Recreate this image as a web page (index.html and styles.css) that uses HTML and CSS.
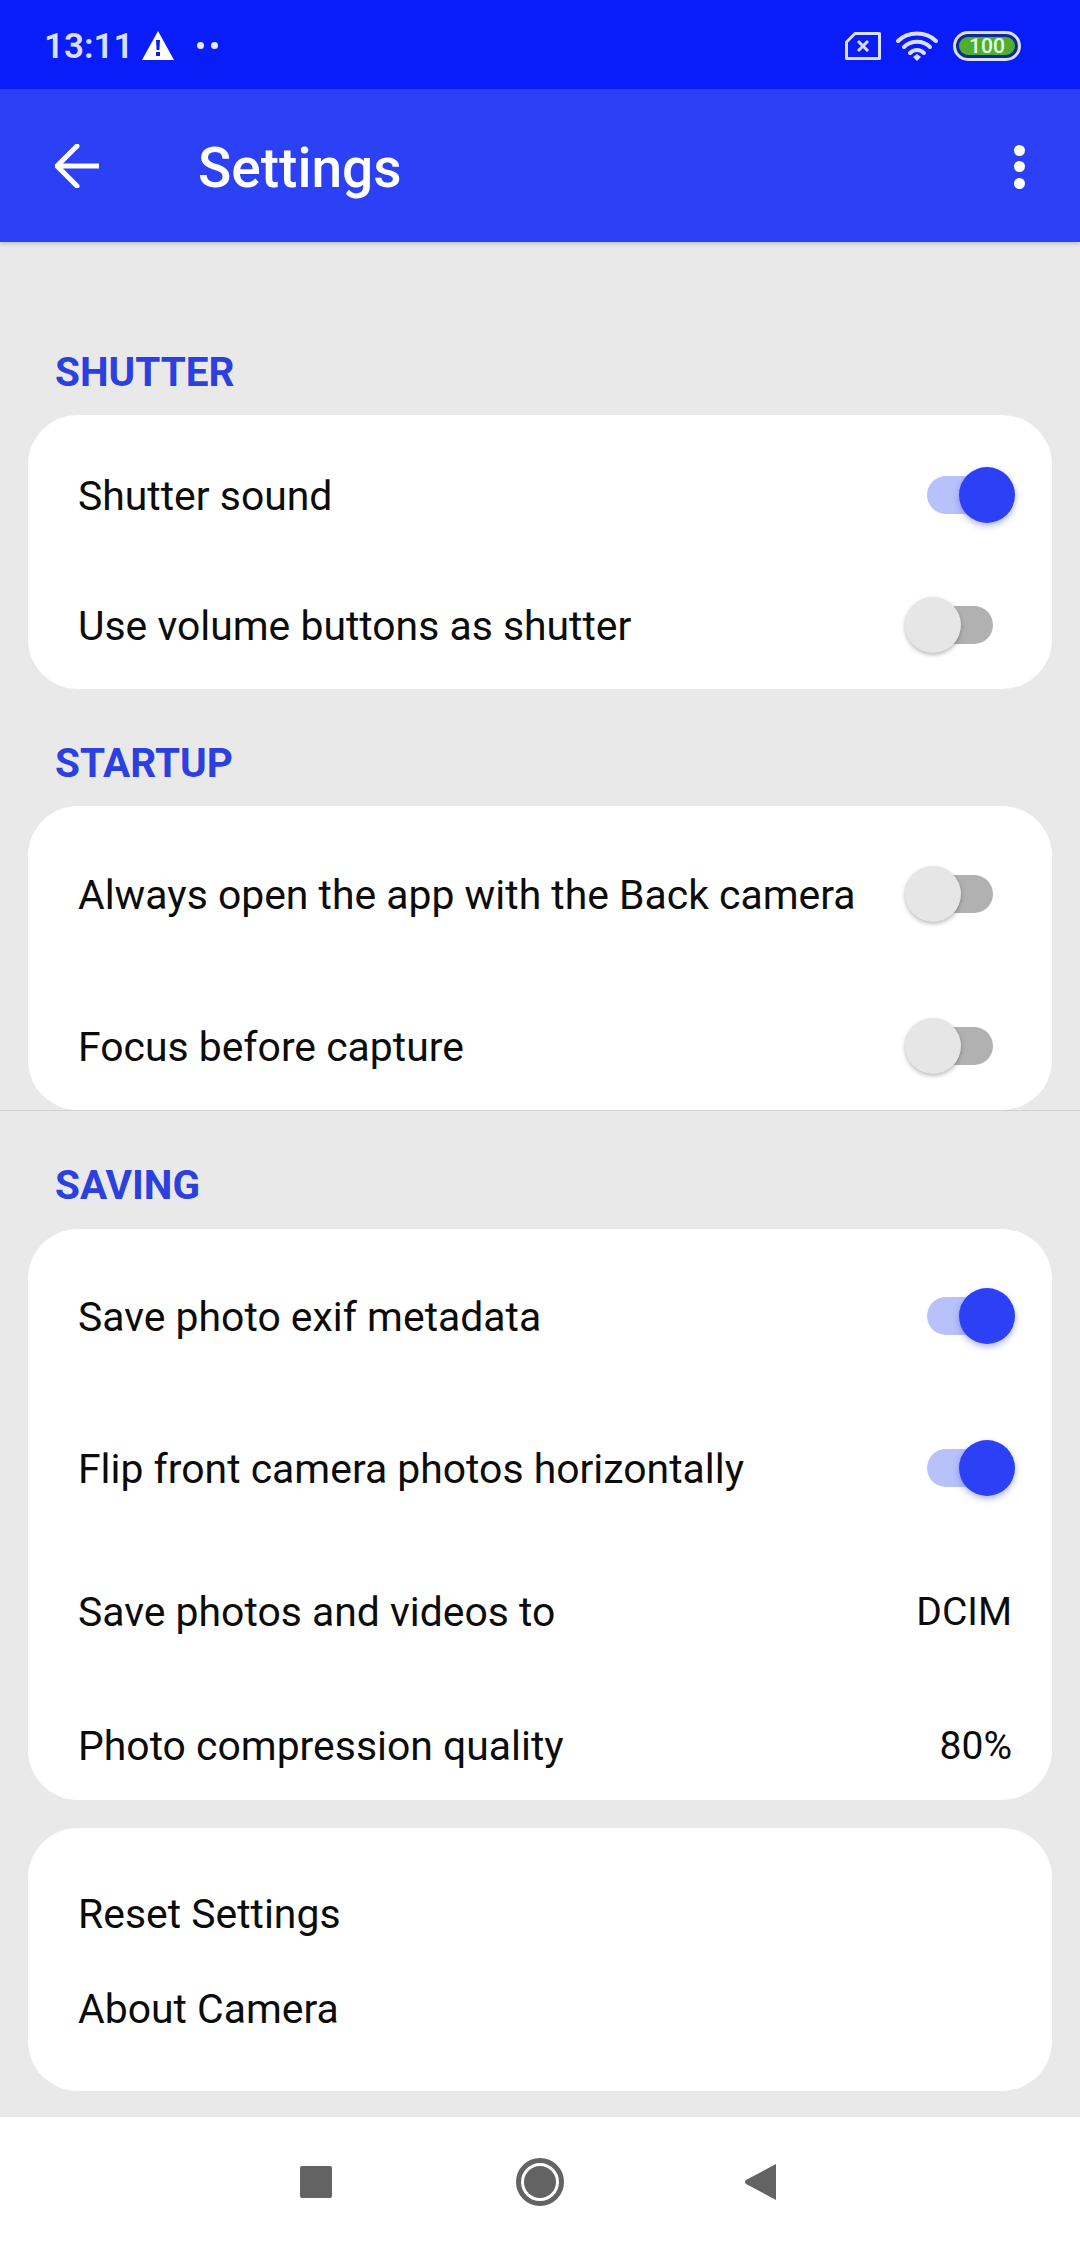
FILE: index.html
```html
<!DOCTYPE html>
<html lang="en">
<head>
<meta charset="utf-8">
<title>Settings</title>
<link rel="stylesheet" href="styles.css">
</head>
<body>
<div class="screen">
  <div class="status">
    <div class="status-left">
      <span class="time">13:11</span>
      <svg class="warn" viewBox="0 0 32 29" width="32" height="29"><path d="M16 0 L32 29 H0 Z" fill="#fff"/><path d="M14 9h4l-.6 10h-2.800z M14 21h4v4h-4z" fill="#0a1cf5"/></svg>
      <span class="dots"><i></i><i></i></span>
    </div>
    <div class="status-right">
      <svg width="36" height="28" viewBox="0 0 36 28"><path d="M10 1.500H34.500V26.500H1.500V10Z" fill="none" stroke="#d8defc" stroke-width="3" stroke-linejoin="round"/><path d="M13 9l10 10M23 9L13 19" stroke="#d8defc" stroke-width="3" fill="none"/></svg>
      <svg width="42" height="30" viewBox="0 0 42 30"><g fill="none" stroke="#d8defc" stroke-width="4" stroke-linecap="round"><path d="M2 10C12 0 30 0 40 10"/><path d="M8 16C15 9 27 9 34 16"/><path d="M14 22C18 18 24 18 28 22"/></g><path d="M17 26l4-3 4 3-4 4z" fill="#d8defc"/></svg>
      <div class="battery"><span class="battery-fill">100</span></div>
    </div>
  </div>
  <header class="appbar">
    <svg class="back" width="44" height="44" viewBox="0 0 44 44"><path d="M22 2L2 22L22 42M2 22H44" fill="none" stroke="#fff" stroke-width="5" stroke-linecap="round" stroke-linejoin="miter"/></svg>
    <h1 class="title">Settings</h1>
    <div class="menu"><i></i><i></i><i></i></div>
  </header>
  <main class="content">
    <section class="group group-shutter">
      <h2 class="heading">SHUTTER</h2>
      <div class="card card-1">
        <div class="row r1a"><span class="label">Shutter sound</span><span class="toggle on"><span class="track"></span><span class="knob"></span></span></div>
        <div class="row r1b"><span class="label">Use volume buttons as shutter</span><span class="toggle"><span class="track"></span><span class="knob"></span></span></div>
      </div>
    </section>
    <section class="group group-startup">
      <h2 class="heading">STARTUP</h2>
      <div class="card card-2">
        <div class="row r2a"><span class="label">Always open the app with the Back camera</span><span class="toggle"><span class="track"></span><span class="knob"></span></span></div>
        <div class="row r2b"><span class="label">Focus before capture</span><span class="toggle"><span class="track"></span><span class="knob"></span></span></div>
      </div>
    </section>
    <div class="divider"></div>
    <section class="group group-saving">
      <h2 class="heading">SAVING</h2>
      <div class="card card-3">
        <div class="row r3a"><span class="label">Save photo exif metadata</span><span class="toggle on"><span class="track"></span><span class="knob"></span></span></div>
        <div class="row r3b"><span class="label">Flip front camera photos horizontally</span><span class="toggle on"><span class="track"></span><span class="knob"></span></span></div>
        <div class="row r3c"><span class="label">Save photos and videos to</span><span class="value">DCIM</span></div>
        <div class="row r3d"><span class="label">Photo compression quality</span><span class="value">80%</span></div>
      </div>
    </section>
    <div class="card card-last">
      <div class="row r4a"><span class="label">Reset Settings</span></div>
      <div class="row r4b"><span class="label">About Camera</span></div>
    </div>
  </main>
  <nav class="navbar">
    <span class="nav-square"></span>
    <span class="nav-home"><span></span></span>
    <svg class="nav-back" width="32" height="36" viewBox="0 0 32 36"><path d="M32 0V36L2 20Q0 18 2 16Z" fill="#636363"/></svg>
  </nav>
</div>
</body>
</html>
```
FILE: styles.css
```css
* { box-sizing: border-box; }
html, body { margin: 0; padding: 0; }
body { font-family: Roboto, "Noto Sans", sans-serif; background: #e9e9ea; }
.screen { width: 1080px; height: 2246px; display: flex; flex-direction: column; overflow: hidden; background: #e9e9ea; }

.status { height: 89px; flex: none; background: #0a1cf8; display: flex; align-items: center; justify-content: space-between; padding: 2px 59px 0 44px; }
.status-left { display: flex; align-items: center; }
.time { font-size: 35px; font-weight: 600; color: #d8defc; line-height: 40px; margin-top: 3px; }
.warn { margin-left: 8px; margin-top: -1px; }
.dots { display: flex; gap: 7px; margin-left: 23px; }
.dots i { width: 7px; height: 7px; border-radius: 50%; background: #e6eafd; }
.status-right { display: flex; align-items: center; gap: 15px; }
.battery { width: 68px; height: 30px; border: 3px solid #d8defc; border-radius: 15px; background: #0f2c8c; padding: 3px; display: flex; }
.battery-fill { flex: 1; background: #4fae32; border-radius: 9px; color: #e8ffe0; font-size: 21px; line-height: 18px; font-weight: 500; text-align: center; }

.appbar { height: 153px; flex: none; background: #2c40f5; display: flex; align-items: center; padding: 0 55px; box-shadow: 0 2px 4px rgba(40,60,120,.22); position: relative; }
.back { flex: none; }
.title { margin: 5px 0 0 99px; font-size: 55px; font-weight: 500; color: #fff; line-height: 64px; flex: 1; }
.menu { display: flex; flex-direction: column; gap: 5.500px; margin-top: 2px; }
.menu i { width: 11px; height: 11px; border-radius: 50%; background: #fff; }

.content { flex: 1; padding: 0 28px; display: flex; flex-direction: column; }
.heading { margin: 0; padding-left: 27px; font-size: 40.500px; line-height: 48px; font-weight: 700; color: #2c40e0; }
.group-shutter { padding-top: 106px; }
.group-startup { padding-top: 50px; }
.group-saving { padding-top: 50px; }
.group .heading { margin-bottom: 19px; }
.group-saving .heading { margin-bottom: 20px; }

.card { background: #fff; border-radius: 50px; overflow: hidden; }
.card-1, .card-2 { padding-bottom: 13px; }
.card-3 { padding-bottom: 4px; }
.card-last { margin-top: 28px; padding-bottom: 32px; }
.row { display: flex; align-items: center; justify-content: space-between; height: 100px; padding: 0 40px 0 50px; }
.label { font-size: 40.900px; color: #0c0c0c; line-height: 48px; white-space: nowrap; }
.value { font-size: 39px; color: #0c0c0c; line-height: 48px; margin-top: -1px; }

.r1a { margin-top: 31px; }
.r1b { margin-top: 30px; }
.r2a { margin-top: 39px; }
.r2b { margin-top: 52px; }
.r3a { margin-top: 38px; }
.r3b { margin-top: 52px; }
.r3c { margin-top: 43px; }
.r3d { margin-top: 34px; }
.r4a { margin-top: 36px; }
.r4b { margin-top: -5px; }

.toggle { position: relative; display: block; width: 109px; height: 56px; flex: none; margin: -2px -2px 0 0; }
.track { position: absolute; left: 22px; top: 9px; width: 66px; height: 38px; border-radius: 19px; background: #b1b1b1; }
.knob { position: absolute; left: 0; top: 0; width: 56px; height: 56px; border-radius: 50%; background: #e6e6e6; box-shadow: 0 2px 4px rgba(0,0,0,.28); }
.toggle.on .track { background: #b9c1fb; }
.toggle.on .knob { left: 54px; background: #2c40f5; box-shadow: 0 3px 6px rgba(44,64,200,.38); }

.divider { height: 1px; background: #d2d2d2; margin: 0 -28px; }

.navbar { height: 129px; flex: none; background: #fff; display: flex; align-items: center; position: relative; padding: 0 304px 0 300px; justify-content: space-between; }
.nav-square { width: 32px; height: 32px; background: #636363; border-radius: 2px; }
.nav-home { width: 48px; height: 48px; margin-left: 4px; border: 5px solid #636363; border-radius: 50%; display: flex; align-items: center; justify-content: center; }
.nav-home span { width: 32px; height: 32px; border-radius: 50%; background: #636363; }
.nav-back { flex: none; }
```
